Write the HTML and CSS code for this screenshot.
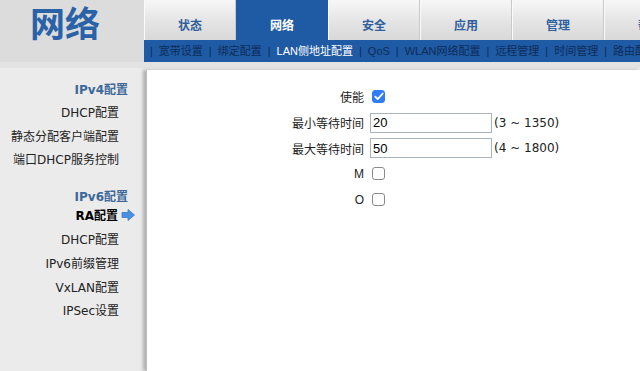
FILE: index.html
```html
<!DOCTYPE html>
<html lang="zh-cn">
<head>
    <meta charset="UTF-8">
    <title>网络</title>
    <link rel="stylesheet" href="styles.css">
</head>
<body>
    <div class="top">
        <div class="logo">网络</div>
        <div class="nav">
            <div class="tabs">
                <div class="tab">状态</div>
                <div class="tab active">网络</div>
                <div class="tab">安全</div>
                <div class="tab">应用</div>
                <div class="tab">管理</div>
                <div class="tab">帮助</div>
            </div>
            <div class="subnav">
                <span class="sep">|</span><span>宽带设置</span>
                <span class="sep">|</span><span>绑定配置</span>
                <span class="sep">|</span><span class="cur">LAN侧地址配置</span>
                <span class="sep">|</span><span>QoS</span>
                <span class="sep">|</span><span>WLAN网络配置</span>
                <span class="sep">|</span><span>远程管理</span>
                <span class="sep">|</span><span>时间管理</span>
                <span class="sep">|</span><span>路由配置</span>
            </div>
        </div>
    </div>

    <div class="main">
        <div class="side">
            <div class="group">IPv4配置</div>
            <div class="item">DHCP配置</div>
            <div class="item">静态分配客户端配置</div>
            <div class="item">端口DHCP服务控制</div>
            <div class="group second">IPv6配置</div>
            <div class="item selected">RA配置<span class="arrow"><svg width="14" height="12" viewBox="0 0 14 12"><path d="M1 3.5h6V0.5l6.5 5.5L7 11.5V8.5H1z" fill="#4a90e2" stroke="#3a78c8" stroke-width="0.8"/></svg></span></div>
            <div class="item">DHCP配置</div>
            <div class="item">IPv6前缀管理</div>
            <div class="item">VxLAN配置</div>
            <div class="item">IPSec设置</div>
        </div>

        <div class="content">
            <div class="form">
                <div class="row">
                    <label>使能</label>
                    <span class="box checked"><svg width="10" height="9" viewBox="0 0 10 9"><path d="M1.3 4.6l2.4 2.5L8.7 1.5" fill="none" stroke="#fff" stroke-width="1.8" stroke-linecap="round" stroke-linejoin="round"/></svg></span>
                </div>
                <div class="row">
                    <label>最小等待时间</label>
                    <input type="text" value="20">
                    <span class="range">(3 ~ 1350)</span>
                </div>
                <div class="row">
                    <label>最大等待时间</label>
                    <input type="text" value="50">
                    <span class="range">(4 ~ 1800)</span>
                </div>
                <div class="row">
                    <label>M</label>
                    <span class="box"></span>
                </div>
                <div class="row">
                    <label>O</label>
                    <span class="box"></span>
                </div>
            </div>
        </div>
    </div>
</body>
</html>
```

FILE: styles.css
```css
* {
    box-sizing: border-box;
}

body {
    margin: 0;
    width: 640px;
    height: 371px;
    overflow: hidden;
    background-color: #e9e9e9;
    font-family: "DejaVu Sans", "Noto Sans CJK SC", sans-serif;
    font-size: 12px;
    color: #222;
}

.top {
    display: flex;
    height: 62px;
}

.logo {
    width: 144px;
    flex-shrink: 0;
    background-color: #dcdcdc;
    color: #2a62a8;
    font-family: "Noto Sans CJK SC", sans-serif;
    font-size: 35px;
    font-weight: bold;
    line-height: 35px;
    padding: 4px 0 0 30px;
}

.nav {
    flex: 1;
    display: flex;
    flex-direction: column;
    overflow: hidden;
}

.tabs {
    display: flex;
    height: 40px;
    background-color: #dedede;
}

.tab {
    width: 92px;
    flex-shrink: 0;
    height: 40px;
    padding-top: 16px;
    text-align: center;
    font-family: "Noto Sans CJK SC", sans-serif;
    font-weight: bold;
    font-size: 12px;
    line-height: 18px;
    color: #2f5f9c;
    background: linear-gradient(#f7f7f7, #e4e4e4 55%, #d9d9d9);
    border-right: 1px solid #c9c9c9;
    border-left: 1px solid #fafafa;
}

.tab.active {
    background: #1f5aa5;
    color: #fff;
    border-color: #1f5aa5;
}

.subnav {
    display: flex;
    height: 22px;
    background-color: #1f5aa5;
    white-space: nowrap;
    font-size: 11px;
    line-height: 22px;
    padding-left: 6px;
    color: #0e2c58;
    font-family: "Liberation Sans", "Noto Sans CJK SC", sans-serif;
}

.subnav .sep {
    margin: 0 6px 0 6px;
}

.subnav .sep:first-child {
    margin-left: 0;
}

.subnav .cur {
    color: #fff;
}

.main {
    display: flex;
    height: 309px;
    border-top: 6px solid #e3e3e3;
}

.side {
    width: 146px;
    flex-shrink: 0;
    padding: 10px 27px 0 0;
    text-align: right;
    background-color: #ebebeb;
    font-size: 12px;
}

.group {
    font-weight: bold;
    color: #3d6899;
    line-height: 24px;
    margin-right: -9px;
}

.group.second {
    margin-top: 17px;
    line-height: 14px;
}

.item {
    line-height: 23.7px;
    color: #222;
}

.item.selected {
    font-weight: bold;
    color: #000;
    margin-right: -16px;
    line-height: 24px;
}

.arrow {
    display: inline-block;
    margin-left: 3px;
    vertical-align: -1px;
}

.content {
    flex: 1;
    background-color: #fff;
    margin-top: 2px;
    box-shadow: -3px 0 3px rgba(0, 0, 0, 0.25);
    border-left: 1px solid #bdbdbd;
}

.form {
    padding-top: 14px;
}

.row {
    display: flex;
    align-items: center;
    height: 25.7px;
}

.row label {
    width: 223px;
    text-align: right;
    padding-right: 6px;
    font-family: "Liberation Sans", "Noto Sans CJK SC", sans-serif;
    font-size: 12px;
    color: #222;
}

.box {
    display: inline-flex;
    align-items: center;
    justify-content: center;
    width: 13px;
    height: 13px;
    margin-left: 2px;
    border: 1px solid #8a8a8a;
    border-radius: 3px;
    background: #fff;
}

.box.checked {
    background-color: #2f7cf6;
    border-color: #2f7cf6;
}

.row input {
    width: 122px;
    height: 20px;
    margin: 0;
    padding: 1px 2px;
    border: 1px solid #a9b4c0;
    font-family: "Liberation Sans", sans-serif;
    font-size: 13px;
    color: #000;
}

.range {
    margin-left: 2px;
    font-size: 12px;
    color: #222;
}
```
